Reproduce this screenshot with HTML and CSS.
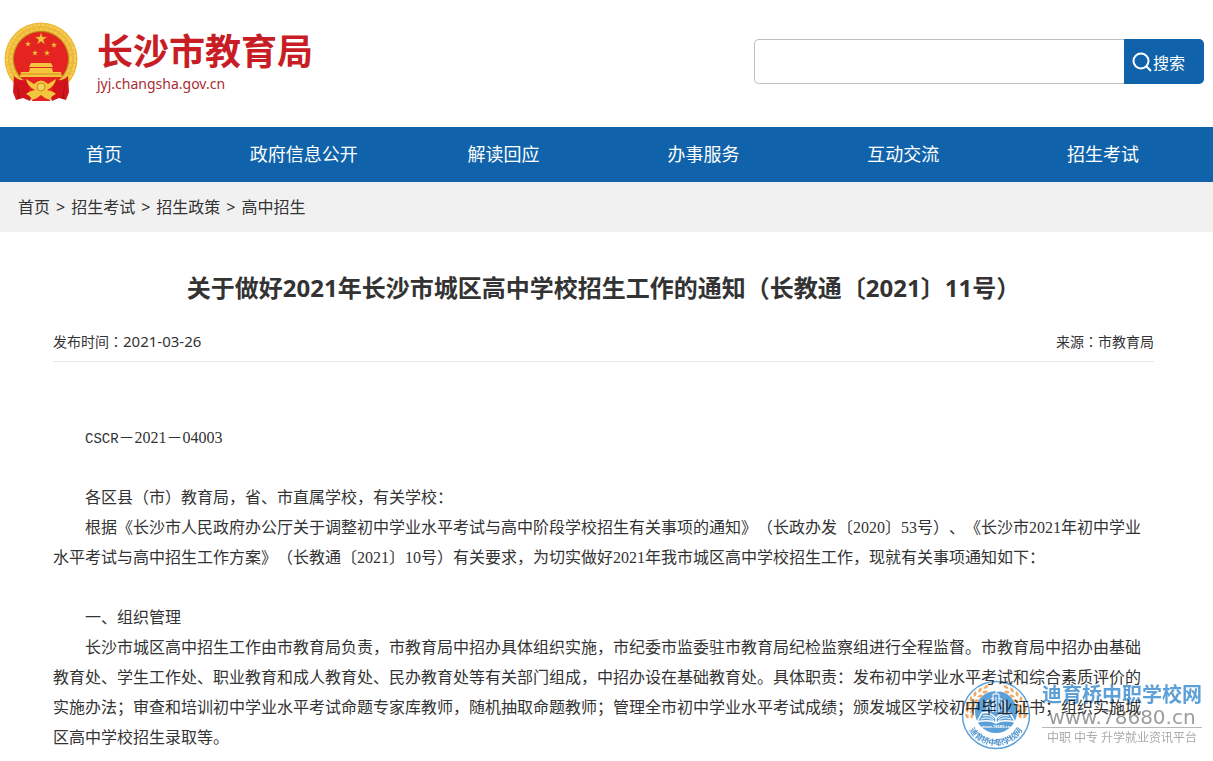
FILE: index.html
```html
<!DOCTYPE html>
<html lang="zh-CN">
<head>
    <meta charset="UTF-8">
    <meta name="viewport" content="width=device-width, initial-scale=1.0">
    <title>长沙市教育局</title>
    <link rel="stylesheet" href="styles.css">
</head>
<body>
    <header class="header">
        <a class="logo" href="#">
            <svg class="emblem" viewBox="0 0 74 80" aria-hidden="true">
                <defs>
                    <path id="star" d="M0-6 1.4-1.9 5.7-1.9 2.2.7 3.5 4.9 0 2.3-3.5 4.9-2.2.7-5.7-1.9-1.4-1.9Z"/>
                </defs>
                <circle cx="37" cy="37" r="36.5" fill="#ecb93a"/>
                <circle cx="37" cy="37" r="34" fill="none" stroke="#f7cf55" stroke-width="2" stroke-dasharray="4 1 2 1"/>
                <circle cx="37" cy="37" r="30" fill="none" stroke="#f5c94c" stroke-width="2" stroke-dasharray="3 2"/>
                <circle cx="37" cy="37" r="27.5" fill="#e52320" stroke="#b9811c"/>
                <g fill="#f3c63d" stroke="#c98b1d" stroke-width=".4">
                    <use href="#star" x="37" y="17"/>
                    <use href="#star" transform="translate(24 22) scale(.5)"/>
                    <use href="#star" transform="translate(50 23) scale(.5)"/>
                    <use href="#star" transform="translate(31 31) scale(.5)"/>
                    <use href="#star" transform="translate(43 31) scale(.5)"/>
                </g>
                <path fill="#f3c63d" d="M27 41H47L49 45H25ZM26 46H48L49 50H57L58 55H16L17 50H25Z"/>
                <path stroke="#d98a1d" d="M17 52H57"/>
                <path fill="#d3141b" d="M10 54Q14 59 22 58L31 65 26 79 19 76 12 78 9 70ZM64 54Q60 59 52 58L43 65 48 79 55 76 62 78 65 70Z"/>
                <path fill="#b00f16" d="M13 60 16 76 14 77ZM61 60 58 76 60 77Z"/>
                <path fill="#e52320" d="M24 62H50L46 79H28Z"/>
                <path fill="#f3c63d" d="M22 57 30 62Q37 55 44 62L52 57Q51 64 43 68 49 69 52 72 47 74 46 78 41 77 37 73 33 77 28 78 27 74 22 72 25 69 31 68 23 64 22 57Z"/>
                <circle cx="37" cy="65" r="4" fill="#f8d35c" stroke="#c98b1d"/>
            </svg>
            <span class="logo-text">
                <strong>长沙市教育局</strong>
                <span class="domain">jyj.changsha.gov.cn</span>
            </span>
        </a>
        <form class="search" role="search">
            <input type="text" aria-label="搜索">
            <button type="button">
                <svg width="20" height="20" viewBox="0 0 20 20" fill="none" stroke="#fff" stroke-width="2" aria-hidden="true">
                    <circle cx="9" cy="9" r="7.5"/>
                    <path d="M14.5 14.5 19 19"/>
                </svg>
                搜索
            </button>
        </form>
    </header>

    <nav class="nav">
        <a href="#">首页</a>
        <a href="#">政府信息公开</a>
        <a href="#">解读回应</a>
        <a href="#">办事服务</a>
        <a href="#">互动交流</a>
        <a href="#">招生考试</a>
    </nav>

    <div class="breadcrumb">
        <a href="#">首页</a>
        <span>&gt;</span>
        <a href="#">招生考试</a>
        <span>&gt;</span>
        <a href="#">招生政策</a>
        <span>&gt;</span>
        <a href="#">高中招生</a>
    </div>

    <main class="article">
        <h1>关于做好2021年长沙市城区高中学校招生工作的通知（长教通〔2021〕11号）</h1>
        <div class="meta">
            <span>发布时间<span class="colon" lang="zh-TW">：</span><time>2021-03-26</time></span>
            <span>来源<span class="colon" lang="zh-TW">：</span>市教育局</span>
        </div>
        <div class="content">
            <p class="doc-number"><span class="code">CSCR</span>－2021－04003</p>
            <p>各区县（市）教育局，省、市直属学校，有关学校：</p>
            <p>根据《长沙市人民政府办公厅关于调整初中学业水平考试与高中阶段学校招生有关事项的通知》（长政办发〔2020〕53号）、《长沙市2021年初中学业水平考试与高中招生工作方案》（长教通〔2021〕10号）有关要求，为切实做好2021年我市城区高中学校招生工作，现就有关事项通知如下：</p>
            <h2>一、组织管理</h2>
            <p>长沙市城区高中招生工作由市教育局负责，市教育局中招办具体组织实施，市纪委市监委驻市教育局纪检监察组进行全程监督。市教育局中招办由基础教育处、学生工作处、职业教育和成人教育处、民办教育处等有关部门组成，中招办设在基础教育处。具体职责：发布初中学业水平考试和综合素质评价的实施办法；审查和培训初中学业水平考试命题专家库教师，随机抽取命题教师；管理全市初中学业水平考试成绩；颁发城区学校初中毕业证书；组织实施城区高中学校招生录取等。</p>
        </div>
    </main>

    <div class="watermark">
        <svg class="seal" viewBox="0 0 70 70" aria-hidden="true">
            <defs>
                <path id="ring" d="M4.5 35A30.5 30.5 0 0 0 65.5 35"/>
                <path id="leaf" d="M-3 0Q0-3 3 0 0 3-3 0Z"/>
            </defs>
            <circle cx="35" cy="35" r="33.5" fill="none" stroke="#3f8fd0" stroke-width="1.5"/>
            <!-- laurel branches -->
            <g fill="#f09a48">
                <g id="branch">
                    <use href="#leaf" transform="translate(6 36) rotate(60)"/>
                    <use href="#leaf" transform="translate(11 36) rotate(110)"/>
                    <use href="#leaf" transform="translate(6 30) rotate(70)"/>
                    <use href="#leaf" transform="translate(11 31) rotate(125)"/>
                    <use href="#leaf" transform="translate(7 25) rotate(80)"/>
                    <use href="#leaf" transform="translate(12 26) rotate(140)"/>
                    <use href="#leaf" transform="translate(10 19) rotate(90)"/>
                    <use href="#leaf" transform="translate(15 21) rotate(150)"/>
                    <use href="#leaf" transform="translate(14 14) rotate(105)"/>
                    <use href="#leaf" transform="translate(19 16) rotate(160)"/>
                    <use href="#leaf" transform="translate(19 10) rotate(120)"/>
                    <use href="#leaf" transform="translate(24 12) rotate(170)"/>
                    <use href="#leaf" transform="translate(25 7) rotate(145)"/>
                </g>
                <use href="#branch" transform="translate(70 0) scale(-1 1)"/>
            </g>
            <circle cx="35" cy="32" r="21" fill="#3f8fd0"/>
            <g fill="none" stroke="#fff">
                <path d="M26 32V21L32 18V32M38 18 44 21V32M32 32V14H38V32M35 32V17M35 14V9L39 10.5 35 12M29 22V31M41 22V31"/>
                <path fill="#3f8fd0" stroke-width="1.5" d="M35 38Q28 31 21 33L16 42Q28 39 35 43 42 39 54 42L49 33Q42 31 35 38V43"/>
                <path d="M22 36Q29 34 33 39M20 39Q28 36 33 41M48 36Q41 34 37 39M50 39Q42 36 37 41"/>
            </g>
            <text class="seal-url" x="35" y="48">www.78680.cn</text>
            <text class="seal-name"><textPath href="#ring" startOffset="50%">迪育桥中职学校网</textPath></text>
        </svg>
        <div class="watermark-text">
            <strong>迪育桥中职学校网</strong>
            <span class="site">www.78680.cn</span>
            <small>中职 中专 升学就业资讯平台</small>
        </div>
    </div>
</body>
</html>
```
FILE: styles.css
```css
* {
    box-sizing: border-box;
}
body {
    margin: 0;
    font-family: "Noto Sans", "Noto Sans CJK SC", sans-serif;
    font-size: 16px;
    color: #333;
    background-color: #fff;
    text-spacing-trim: space-all;
}
a {
    color: inherit;
    text-decoration: none;
}
.header {
    display: flex;
    justify-content: space-between;
    align-items: center;
    height: 127px;
    padding: 0 9px 4px 4px;
}
.logo {
    display: flex;
    align-items: center;
    gap: 19px;
    color: #c81d25;
}
.emblem {
    width: 74px;
    height: 80px;
}
.logo-text {
    display: flex;
    flex-direction: column;
}
.logo-text strong {
    font-size: 36px;
    line-height: 44px;
}
.domain {
    font-size: 14px;
    line-height: 20px;
    color: #a92b32;
}
.search {
    display: flex;
    width: 450px;
    height: 45px;
}
.search input {
    flex: 1;
    min-width: 0;
    padding: 0 12px;
    border: 1px solid #bfbfbf;
    border-right: none;
    border-radius: 5px 0 0 5px;
    font: inherit;
}
.search button {
    display: flex;
    align-items: center;
    gap: 1px;
    width: 80px;
    padding: 0 8px;
    border: none;
    border-radius: 0 5px 5px 0;
    background-color: #1063aa;
    color: #fff;
    font: inherit;
    cursor: pointer;
}
.nav {
    display: flex;
    padding: 0 10px 0 4px;
    background-color: #1063aa;
    color: #fff;
}
.nav a {
    flex: 1;
    font-size: 18px;
    line-height: 55px;
    text-align: center;
}
.breadcrumb {
    display: flex;
    gap: 6px;
    padding: 0 18px;
    line-height: 50px;
    background-color: #f1f1f1;
}
.article {
    padding: 36px 59px 0 53px;
}
.article h1 {
    margin: 0;
    font-size: 24px;
    line-height: 40px;
    text-align: center;
}
.meta {
    display: flex;
    justify-content: space-between;
    margin-top: 14px;
    border-bottom: 1px solid #e6e6e6;
    font-size: 14px;
    line-height: 39px;
}
.meta time {
    font-size: 15px;
}
/* colon centred in its em box */
.colon {
    font-family: "Noto Sans CJK TC", sans-serif;
    line-height: 1;
}
.content {
    padding-top: 61px;
    font-family: "Liberation Serif", "Noto Sans CJK SC", serif;
    line-height: 30px;
}
.content p {
    margin: 0;
    text-indent: 32px;
}
.content .doc-number {
    margin-bottom: 30px;
}
.content .code {
    font-family: "Liberation Mono", monospace;
    font-size: 14px;
    line-height: 1;
}
.content h2 {
    margin: 30px 0 0;
    font-size: 16px;
    font-weight: normal;
    text-indent: 32px;
}
.watermark {
    position: fixed;
    right: 11px;
    bottom: 11px;
    display: flex;
    align-items: center;
    gap: 11px;
    opacity: 0.85;
    mix-blend-mode: multiply;
    pointer-events: none;
}
.seal {
    width: 70px;
    height: 70px;
}
.seal-url {
    font-size: 4px;
    font-weight: bold;
    text-anchor: middle;
    fill: #fff;
}
.seal-name {
    font-size: 8px;
    font-weight: bold;
    text-anchor: middle;
    fill: #2f7fc2;
}
.watermark-text {
    display: flex;
    flex-direction: column;
    width: 160px;
    white-space: nowrap;
    text-align: center;
}
.watermark-text strong {
    font-size: 20px;
    line-height: 24px;
    color: #3f8fd0;
}
.watermark-text .site {
    font-family: "DejaVu Sans", sans-serif;
    font-size: 20px;
    line-height: 20px;
    color: #8a8a8a;
    border-bottom: 1px solid #aaa;
}
.watermark-text small {
    font-size: 12px;
    line-height: 20px;
    color: #999;
}
```
